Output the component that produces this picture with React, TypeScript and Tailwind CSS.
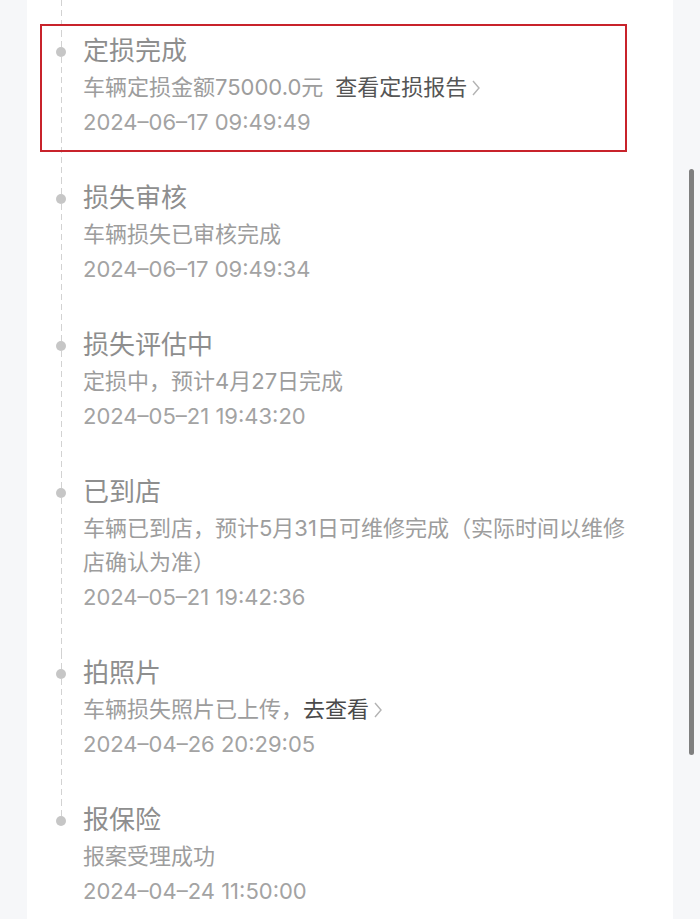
import * as React from "react"

type Step = {
  title: string
  lines: React.ReactNode[]
  time: string
}

function Chevron() {
  return (
    <svg
      width="10"
      height="18"
      viewBox="0 0 10 18"
      className="ml-[4px] inline-block align-[-2px]"
      fill="none"
      stroke="#b3b3b3"
      strokeWidth="1.4"
    >
      <polyline points="2,2 8,9 2,16" />
    </svg>
  )
}

const steps: Step[] = [
  {
    title: "定损完成",
    lines: [
      <>
        车辆定损金额75000.0元
        <span className="ml-[12px] text-[#555555]">查看定损报告</span>
        <Chevron />
      </>,
    ],
    time: "2024–06–17 09:49:49",
  },
  {
    title: "损失审核",
    lines: ["车辆损失已审核完成"],
    time: "2024–06–17 09:49:34",
  },
  {
    title: "损失评估中",
    lines: ["定损中，预计4月27日完成"],
    time: "2024–05–21 19:43:20",
  },
  {
    title: "已到店",
    lines: ["车辆已到店，预计5月31日可维修完成（实际时间以维修店确认为准）"],
    time: "2024–05–21 19:42:36",
  },
  {
    title: "拍照片",
    lines: [
      <>
        车辆损失照片已上传，
        <span className="text-[#4a4a4a]">去查看</span>
        <Chevron />
      </>,
    ],
    time: "2024–04–26 20:29:05",
  },
  {
    title: "报保险",
    lines: ["报案受理成功"],
    time: "2024–04–24 11:50:00",
  },
]

const dash =
  "w-px bg-[linear-gradient(#d2d2d2_65%,transparent_0)] bg-[length:1px_10px]"

function TimelineItem({
  step,
  last,
  highlight,
}: {
  step: Step
  last?: boolean
  highlight?: boolean
}) {
  return (
    <div className="relative flex pl-[29px]">
      {highlight && (
        <div className="pointer-events-none absolute left-[13px] top-[-7px] h-[128px] w-[587px] border-2 border-[#c8232b]" />
      )}
      <div className="flex w-[10px] flex-col items-center">
        <div className={`h-[16px] ${dash}`} />
        <div className="h-[10px] w-[10px] rounded-full bg-[#c6c6c6]" />
        {!last && <div className={`flex-1 ${dash}`} />}
      </div>
      <div className="ml-[17px] w-[562px] pb-[38px]">
        <div className="text-[26px] leading-[39px] text-[#8e8e8e]">
          {step.title}
        </div>
        {step.lines.map((l, i) => (
          <div key={i} className="text-[22px] leading-[34px] text-[#9d9d9d]">
            {l}
          </div>
        ))}
        <div className="text-[22px] leading-[36px] text-[#a3a3a3]">
          {step.time}
        </div>
      </div>
    </div>
  )
}

export default function App() {
  return (
    <div
      className="flex h-[919px] overflow-hidden bg-[#f6f7f9]"
      style={{ fontFamily: 'Inter, "Noto Sans CJK SC", sans-serif' }}
    >
      <div className="w-[27px] shrink-0" />
      <div className="flex-1 bg-white">
        <div className="flex pl-[29px]">
          <div className="flex w-[10px] justify-center">
            <div className={`h-[31px] ${dash}`} />
          </div>
        </div>
        {steps.map((s, i) => (
          <TimelineItem
            key={s.title}
            step={s}
            highlight={i === 0}
            last={i === steps.length - 1}
          />
        ))}
      </div>
      <div className="w-[27px] shrink-0">
        <div className="ml-[16px] mt-[169px] h-[586px] w-[5px] rounded-full bg-[#7f7f7f]" />
      </div>
    </div>
  )
}
